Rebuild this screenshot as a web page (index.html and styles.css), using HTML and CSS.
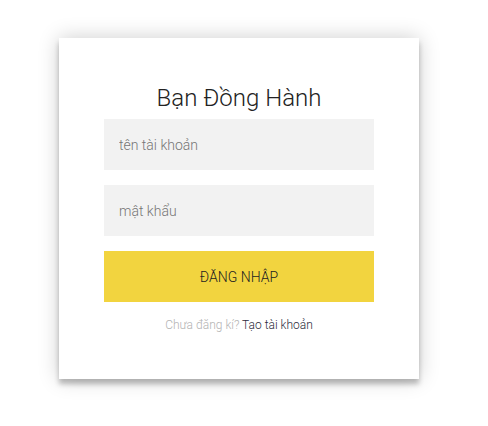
FILE: index.html
```html
<!DOCTYPE html>
<html lang="vi">
<head>
<meta charset="utf-8">
<title>Bạn Đồng Hành</title>
<link rel="stylesheet" href="styles.css">
</head>
<body>
<div class="page">
  <form class="card">
    <h1 class="title">Bạn Đồng Hành</h1>
    <input class="field" type="text" placeholder="tên tài khoản">
    <input class="field" type="password" placeholder="mật khẩu">
    <button class="submit" type="button">Đăng nhập</button>
    <p class="message">Chưa đăng kí? <a class="link" href="#">Tạo tài khoản</a></p>
  </form>
</div>
</body>
</html>
```
FILE: styles.css
```css
html, body {
  margin: 0;
  padding: 0;
  background: #fff;
  font-family: Roboto, "Noto Sans", sans-serif;
}
.page {
  padding: 38px 0 46px 59px;
}
.card {
  box-sizing: border-box;
  width: 360px;
  padding: 45px;
  background: #fff;
  box-shadow: 0 0 20px 0 rgba(0,0,0,0.2), 0 5px 5px 0 rgba(0,0,0,0.24);
  display: flex;
  flex-direction: column;
  text-align: center;
}
.title {
  margin: 0;
  height: 36px;
  line-height: 30px;
  font-size: 24px;
  font-weight: 300;
  color: #222;
}
.field {
  box-sizing: border-box;
  width: 100%;
  height: 51px;
  margin: 0 0 15px;
  padding: 0 15px;
  border: 0;
  outline: 0;
  background: #f2f2f2;
  font-family: Roboto, sans-serif;
  font-size: 14px;
  font-weight: 300;
  color: #333;
}
.field::placeholder {
  color: #757575;
}
.submit {
  height: 51px;
  border: 0;
  background: #f2d43f;
  font-family: Roboto, sans-serif;
  font-size: 14px;
  font-weight: 300;
  text-transform: uppercase;
  color: #222;
}
.message {
  margin: 15px 0 0;
  font-size: 12px;
  line-height: 17px;
  font-weight: 300;
  color: #b3b3b3;
}
.link {
  color: #2b2b3b;
  font-weight: 300;
  text-decoration: none;
}
```
